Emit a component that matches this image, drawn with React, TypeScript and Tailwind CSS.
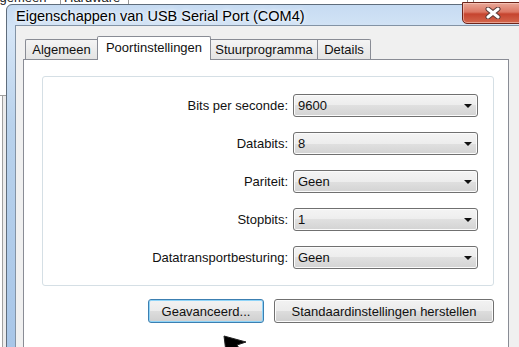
import React from "react";

function Combo({ value }: { value: string }) {
  return (
    <div className="w-[185px] h-[23px] border border-[#707070] rounded-[3px] bg-[linear-gradient(#f4f4f4_0%,#ededed_50%,#e0e0e0_50%,#d3d3d3_100%)] shadow-[inset_0_0_0_1px_#fbfbfb] flex items-center pl-[4px] pr-[5px] text-[13px] text-[#111]">
      <span className="flex-1 leading-[15px]">{value}</span>
      <svg width="8" height="4" viewBox="0 0 8 4">
        <polygon points="0,0 8,0 4,4" fill="#111" />
      </svg>
    </div>
  );
}

function Row({ label, value }: { label: string; value: string }) {
  return (
    <div className="h-[23px] flex items-center justify-end">
      <span className="mr-[5px] text-[13px] text-[#111] leading-[15px]">{label}</span>
      <Combo value={value} />
    </div>
  );
}

export default function App() {
  return (
    <div className="relative w-[519px] h-[347px] overflow-hidden bg-white font-['Liberation_Sans',Arial,sans-serif]">
      {/* background window */}
      <div className="absolute left-[-12px] top-[-10px] text-[13px] text-[#222] leading-[15px]">Algemeen</div>
      <div className="absolute left-[60px] top-0 w-px h-[5px] bg-[#999]" />
      <div className="absolute left-[64px] top-[-10px] text-[13px] text-[#222] leading-[15px]">Hardware</div>
      <div className="absolute left-[128px] top-0 w-px h-[5px] bg-[#999]" />
      <div className="absolute left-[467px] top-0 w-px h-[5px] bg-[#888]" />
      <div className="absolute left-[473px] top-0 w-px h-[5px] bg-[#888]" />
      <div className="absolute left-[2px] top-[95px] w-px h-[260px] bg-[#a0a0a0]" />
      <div className="absolute left-0 top-[95px] w-[6px] h-px bg-[#a0a0a0]" />
      <div className="absolute left-[3px] top-[96px] w-[3px] h-[260px] bg-[#ececec]" />

      {/* dialog window */}
      <div className="absolute left-[6px] top-[4px] w-[540px] h-[420px] rounded-tl-[6px] border border-[#5f6d7c] bg-[linear-gradient(180deg,#c6dbf2_0px,#d5e5f6_26px,#b9d2ec_120px,#a8c6e8_343px)] flex flex-col">
        <div className="h-[28px] pl-[9px] pt-[3px] flex items-center text-[14.5px] text-black leading-[17px] [text-shadow:0_0_6px_#ffffff,0_0_3px_#ffffff]">
          Eigenschappen van USB Serial Port (COM4)
        </div>
        <div className="ml-[8px] flex-1 border-l border-t border-[#8393a5] bg-[#f0f0f0] pt-[10px] pl-[7px]">
          {/* tabs */}
          <div className="h-[23px] flex items-end ml-[2px]">
            <div className="w-[72px] h-[20px] border-l border-t border-[#898c95] rounded-tl-[2px] bg-[linear-gradient(#f4f4f4,#e4e4e4)] flex items-center justify-center text-[13px] text-[#111] leading-[15px]">
              Algemeen
            </div>
            <div className="relative z-10 w-[114px] h-[24px] -mb-px border-l border-t border-r border-[#898c95] rounded-t-[2px] bg-white flex items-center justify-center pb-[2px] text-[13px] text-[#111] leading-[15px]">
              Poortinstellingen
            </div>
            <div className="w-[107px] h-[20px] border-t border-r border-[#898c95] bg-[linear-gradient(#f4f4f4,#e4e4e4)] flex items-center justify-center text-[13px] text-[#111] leading-[15px]">
              Stuurprogramma
            </div>
            <div className="w-[53px] h-[20px] border-t border-r border-[#898c95] rounded-tr-[2px] bg-[linear-gradient(#f4f4f4,#e4e4e4)] flex items-center justify-center text-[13px] text-[#111] leading-[15px]">
              Details
            </div>
          </div>
          {/* panel */}
          <div className="w-[486px] h-[400px] border border-[#898c95] bg-white pl-[18px] pt-[16px]">
            <div className="w-[452px] h-[210px] border border-[#d5dfe5] rounded-[3px] flex flex-col gap-[15px] pt-[17px] pr-[15px]">
              <Row label="Bits per seconde:" value="9600" />
              <Row label="Databits:" value="8" />
              <Row label="Pariteit:" value="Geen" />
              <Row label="Stopbits:" value="1" />
              <Row label="Datatransportbesturing:" value="Geen" />
            </div>
            <div className="w-[452px] mt-[13px] flex justify-end gap-[10px]">
              <div className="w-[116px] h-[24px] border border-[#3c7fb1] rounded-[3px] bg-[linear-gradient(#f2f2f2_0%,#ebebeb_50%,#dddddd_50%,#cfcfcf_100%)] shadow-[inset_0_0_0_1px_#8fd4f8] flex items-center justify-center text-[13px] text-[#111] leading-[15px]">
                Geavanceerd...
              </div>
              <div className="w-[220px] h-[24px] border border-[#707070] rounded-[3px] bg-[linear-gradient(#f2f2f2_0%,#ebebeb_50%,#dddddd_50%,#cfcfcf_100%)] shadow-[inset_0_0_0_1px_#fbfbfb] flex items-center justify-center text-[13px] text-[#111] leading-[15px]">
                Standaardinstellingen herstellen
              </div>
            </div>
          </div>
        </div>
      </div>

      {/* close button */}
      <div className="absolute left-[462px] top-[2px] w-[70px] h-[22px] rounded-bl-[5px] border border-[#6e2419] bg-[linear-gradient(#e9a797_0%,#dc7764_45%,#c6442f_55%,#d4674d_100%)] shadow-[inset_0_0_0_1px_rgba(255,220,210,0.5)]">
        <svg className="absolute left-[22px] top-[4px]" width="16" height="12" viewBox="0 0 16 12">
          <path d="M3 2 L13 10 M13 2 L3 10" stroke="#5a3a36" strokeWidth="5" strokeLinecap="round" />
          <path d="M3 2 L13 10 M13 2 L3 10" stroke="#ffffff" strokeWidth="3" strokeLinecap="round" />
        </svg>
      </div>

      {/* mouse cursor */}
      <svg className="absolute left-[222px] top-[334px]" width="30" height="20" viewBox="0 0 30 20">
        <polygon points="2,2 24,8 15,11 21,20 14,22 9,14 4,18" fill="#000" stroke="#222" strokeWidth="1" />
      </svg>
    </div>
  );
}
